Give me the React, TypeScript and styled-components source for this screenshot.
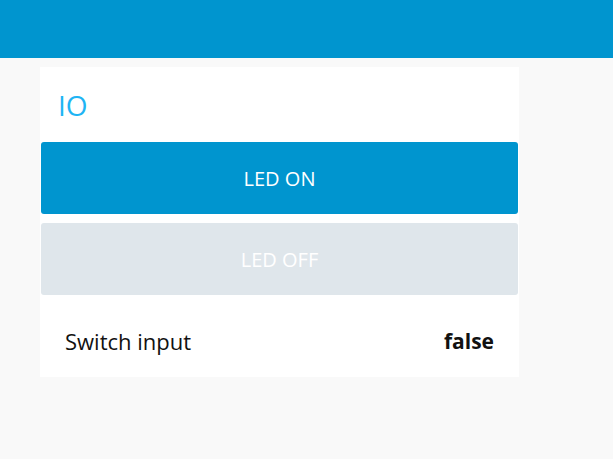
import React from "react";
import styled, { createGlobalStyle } from "styled-components";

const Global = createGlobalStyle`
  html, body {
    margin: 0;
    padding: 0;
    background: #f9f9f9;
    font-family: "Open Sans", "Noto Sans", sans-serif;
  }
`;

const Header = styled.header`
  height: 58px;
  background: #0095cf;
`;

const Main = styled.main`
  padding: 9px 0 0 40px;
`;

const Card = styled.section`
  width: 479px;
  background: #ffffff;
  padding: 0 1px;
  box-sizing: border-box;
  display: flex;
  flex-direction: column;
`;

const Title = styled.h2`
  margin: 0;
  height: 75px;
  padding: 20px 0 0 17px;
  box-sizing: border-box;
  font-size: 28px;
  font-weight: 400;
  line-height: 36px;
  color: #1fb4f4;
`;

const Buttons = styled.div`
  display: flex;
  flex-direction: column;
  gap: 9px;
`;

const Button = styled.button<{ $active?: boolean }>`
  height: 72px;
  border: none;
  border-radius: 3px;
  background: ${(p) => (p.$active ? "#0095cf" : "#dfe6eb")};
  color: #ffffff;
  font-family: "Open Sans", "Noto Sans", sans-serif;
  font-size: 20px;
  padding: 0;
  cursor: pointer;
`;

const Row = styled.div`
  height: 82px;
  display: flex;
  align-items: center;
  justify-content: space-between;
  padding: 9px 24px 0 24px;
  box-sizing: border-box;
  font-size: 22px;
  color: #111111;
`;

const Value = styled.span`
  font-weight: 700;
  font-size: 21px;
`;

export default function App() {
  return (
    <>
      <Global />
      <Header />
      <Main>
        <Card>
          <Title>IO</Title>
          <Buttons>
            <Button $active>LED ON</Button>
            <Button>LED OFF</Button>
          </Buttons>
          <Row>
            <span>Switch input</span>
            <Value>false</Value>
          </Row>
        </Card>
      </Main>
    </>
  );
}
